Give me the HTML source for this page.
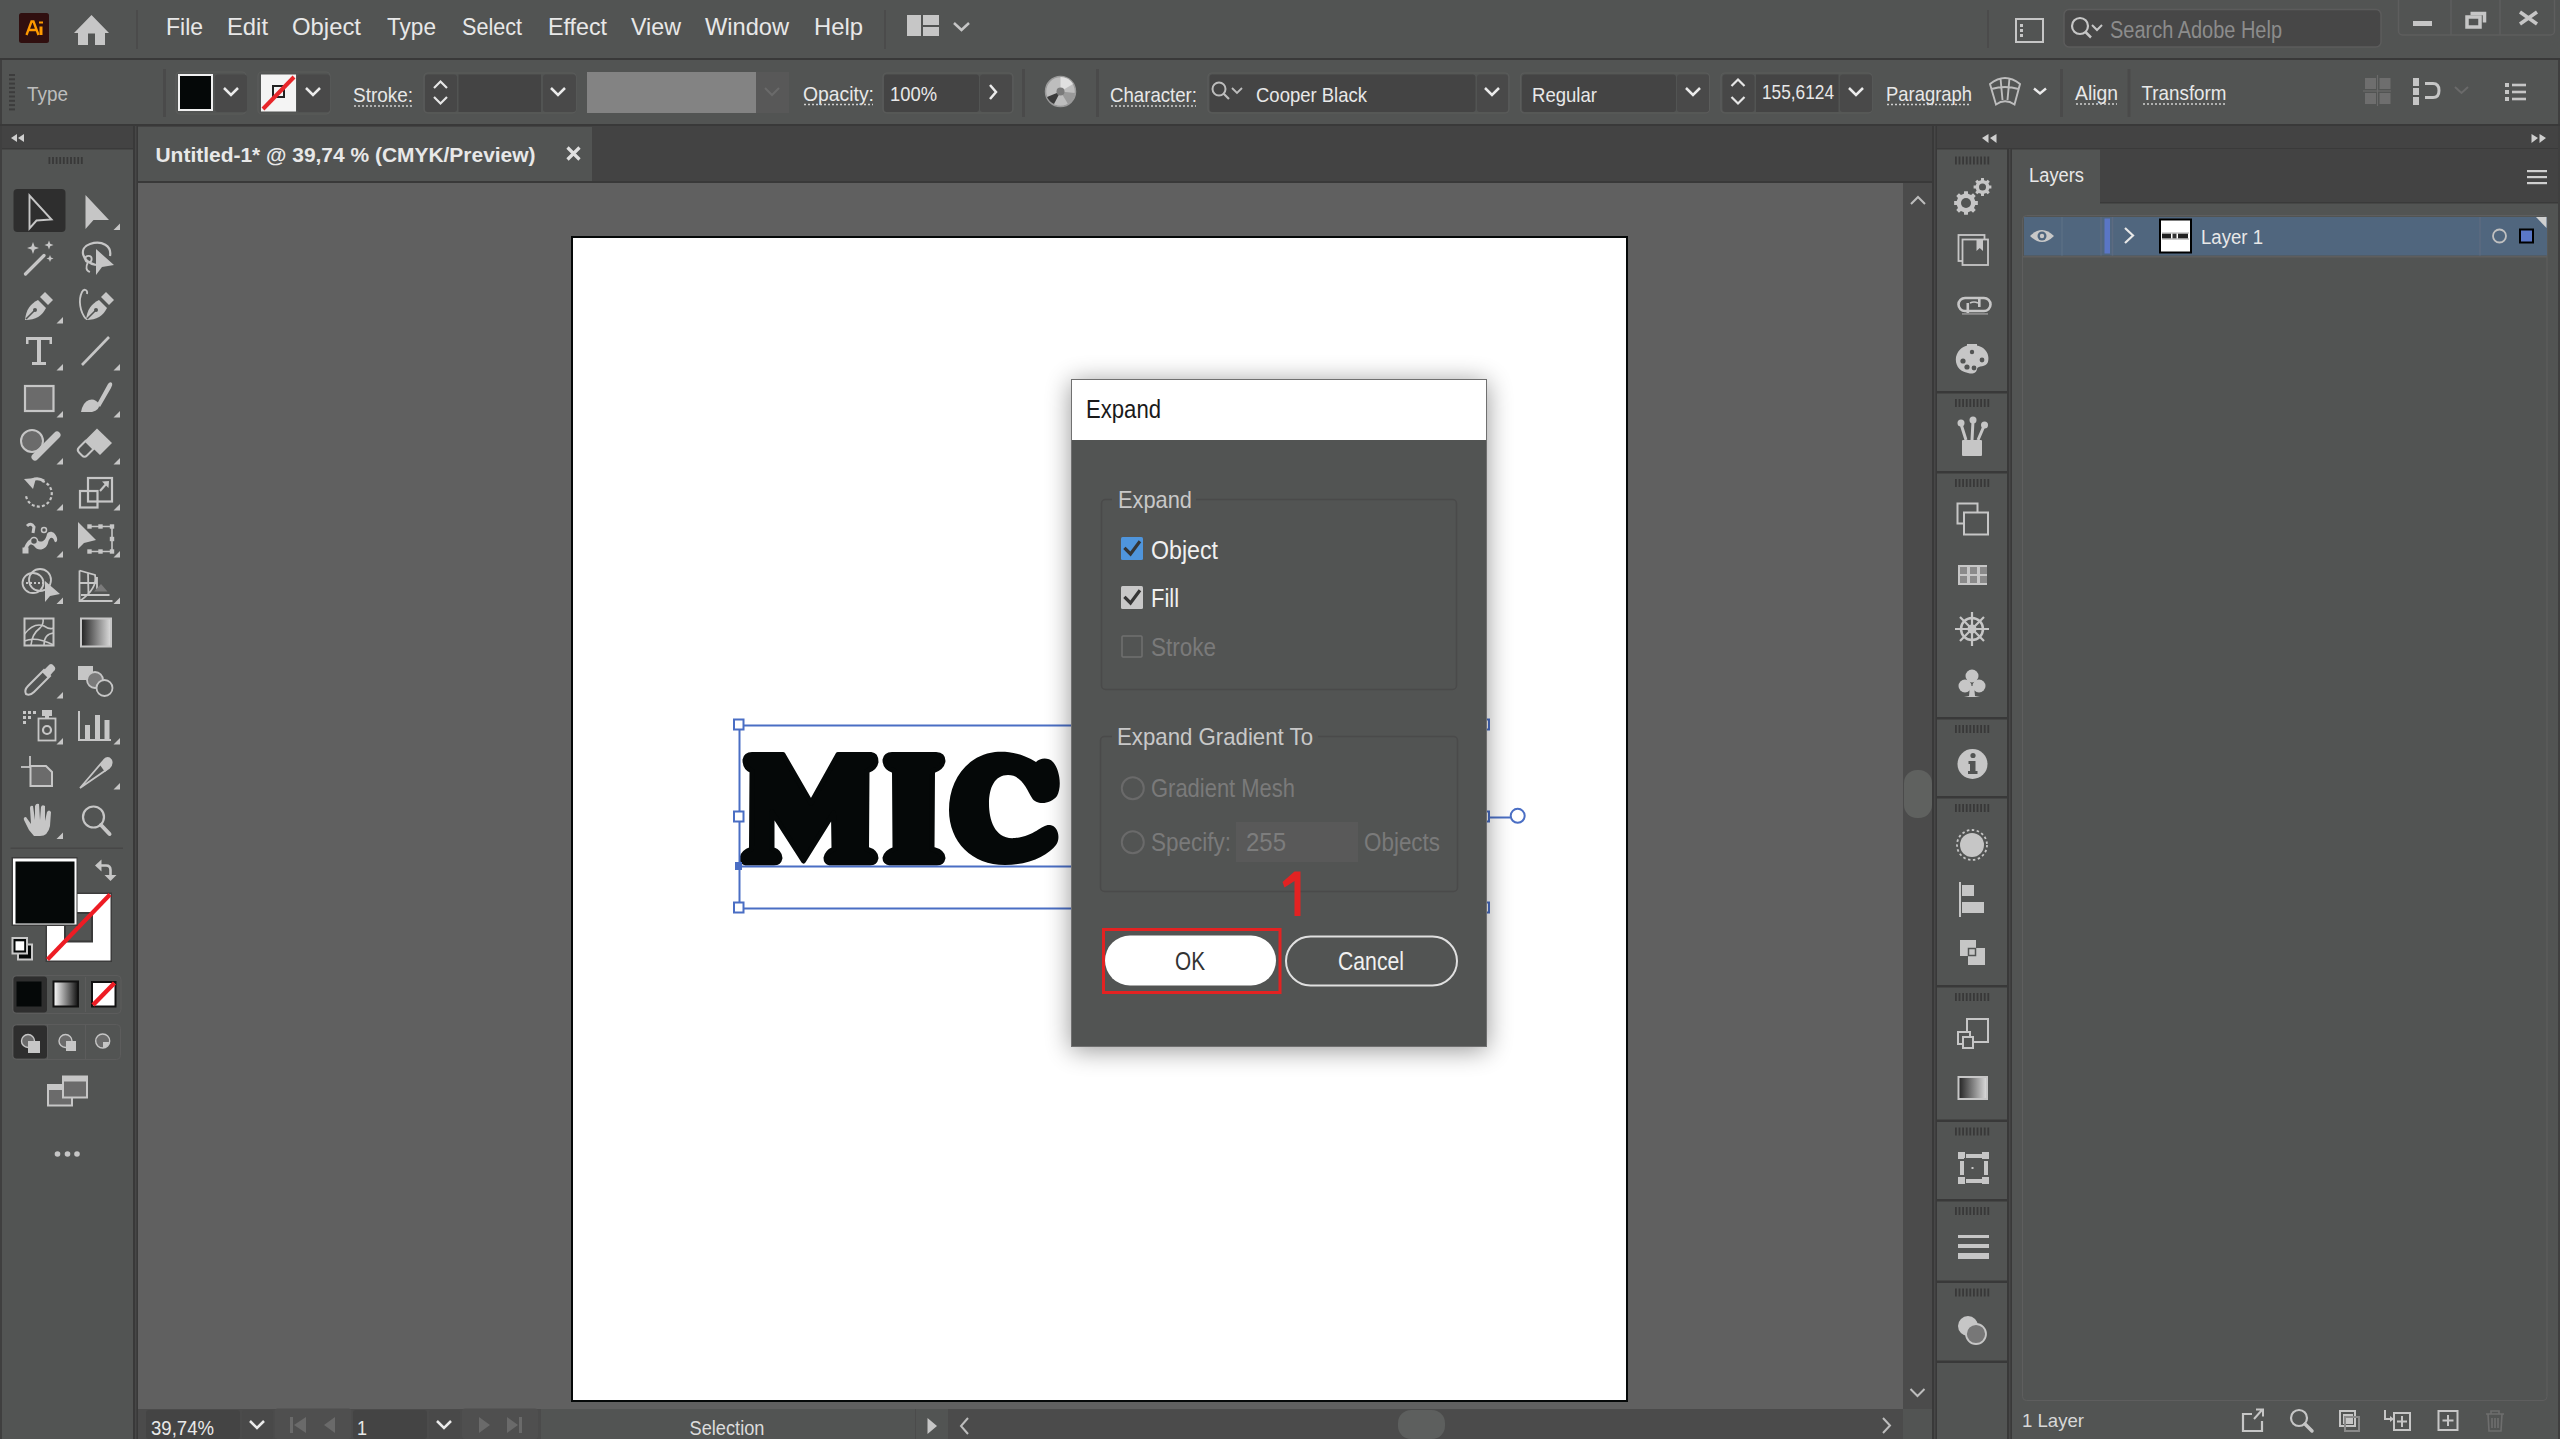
<!DOCTYPE html>
<html><head><meta charset="utf-8"><title>Illustrator</title>
<style>html,body{margin:0;padding:0;background:#525453;overflow:hidden;width:2560px;height:1439px}svg{display:block}</style>
</head><body>
<svg width="2560" height="1439" viewBox="0 0 2560 1439" shape-rendering="geometricPrecision">
<rect x="0" y="0" width="2560" height="1439" fill="#525453" />
<rect x="0" y="0" width="2560" height="58" fill="#525453" />
<rect x="0" y="58" width="2560" height="2" fill="#393939" />
<rect x="0" y="60" width="2560" height="64" fill="#525453" />
<rect x="0" y="60" width="2" height="64" fill="#3f3f3f" />
<rect x="2558" y="60" width="2" height="64" fill="#3f3f3f" />
<rect x="0" y="124" width="2560" height="2" fill="#393939" />
<rect x="0" y="126" width="2" height="1313" fill="#3f3f3f" />
<rect x="2" y="126" width="131" height="23" fill="#434343" />
<rect x="2" y="148" width="131" height="1.5" fill="#3a3a3a" />
<rect x="133" y="126" width="5" height="1313" fill="#393939" />
<rect x="135" y="126" width="1.5" height="1313" fill="#474747" />
<rect x="138" y="126" width="1794" height="55" fill="#434343" />
<rect x="138" y="127" width="454" height="54" fill="#525453" />
<rect x="138" y="181" width="1794" height="2" fill="#393939" />
<rect x="138" y="183" width="1765" height="1226" fill="#606060" />
<rect x="1903" y="183" width="29" height="1226" fill="#4b4b4b" />
<rect x="138" y="1409" width="1765" height="30" fill="#4b4b4b" />
<rect x="1903" y="1409" width="29" height="30" fill="#525453" />
<rect x="1932" y="126" width="5" height="1313" fill="#393939" />
<rect x="1934" y="126" width="1.5" height="1313" fill="#474747" />
<rect x="1937" y="126" width="621" height="23" fill="#434343" />
<rect x="1937" y="148" width="621" height="1.5" fill="#3a3a3a" />
<rect x="2007" y="149" width="5" height="1290" fill="#393939" />
<rect x="2009" y="149" width="1.5" height="1290" fill="#474747" />
<rect x="2558" y="126" width="2" height="1313" fill="#3f3f3f" />
<rect x="2100" y="149" width="458" height="54" fill="#434343" />
<rect x="2100" y="202" width="458" height="1.5" fill="#3a3a3a" />
<rect x="571" y="236" width="1057" height="1166" fill="#050808" />
<rect x="573" y="238" width="1053" height="1162" fill="#ffffff" />
<g fill="#050808" stroke="#050808" stroke-width="5" stroke-linejoin="round">
<path d="M745,760 Q746,754.5 752,754.5 L783,754.5 L811,803 L838,754.5 L871,754.5 Q876,755 876,762 Q875,768 867,771 L866.5,849 Q876,852 876,858 Q875,863 870,863 L830,863 Q826,862 826,858 Q827,852 834,849 L833.5,813 L803.5,861 L772,812 L772,849 Q780,852 780,858 Q779,863 774,863 L746,863 Q742,862 742,858 Q743,852 751.5,849 L752,771 Q745,768 745,760 Z" fill="#050808" />
<path d="M885,760 Q886,754.5 892,754.5 L936,754.5 Q943,755 943,761 Q942,768 932.5,771 L932,849 Q943,852 943,858 Q942,863 937,863 L890,863 Q885,862 885,858 Q886,852 895,849 L894.5,771 Q885,768 885,760 Z" fill="#050808" />
</g>
<path d="M1036,762 C1020,752 1005,751 995,752 C965,756 949,782 949,810 C949,842 972,865 1005,865 C1030,865 1048,855 1056,845 C1061,838 1058,826 1050,825 C1042,824 1035,836 1015,838 C995,840 989,820 989,804 C989,787 995,775 1008,775 C1022,775 1027,790 1032,798 C1036,805 1050,805 1057,796 C1062,787 1060,770 1053,762 C1048,757 1040,758 1036,762 Z" fill="#050808" />
<line x1="739.5" y1="725.5" x2="1487" y2="725.5" stroke="#4a6ec4" stroke-width="2" />
<line x1="739.5" y1="866.5" x2="1487" y2="866.5" stroke="#4a6ec4" stroke-width="2" />
<line x1="739.5" y1="908.5" x2="1487" y2="908.5" stroke="#4a6ec4" stroke-width="2" />
<line x1="739.5" y1="725" x2="739.5" y2="909" stroke="#4a6ec4" stroke-width="2" />
<rect x="734" y="719.5" width="9.5" height="10" fill="#ffffff" stroke="#4a6ec4" stroke-width="2" />
<rect x="734" y="811.5" width="9.5" height="10" fill="#ffffff" stroke="#4a6ec4" stroke-width="2" />
<rect x="734" y="902.5" width="9.5" height="10" fill="#ffffff" stroke="#4a6ec4" stroke-width="2" />
<rect x="735" y="862" width="7" height="8" fill="#4a6ec4" />
<rect x="1482" y="719.5" width="7" height="10" fill="#ffffff" stroke="#4a6ec4" stroke-width="2" />
<rect x="1482" y="811.5" width="7" height="10" fill="#ffffff" stroke="#4a6ec4" stroke-width="2" />
<rect x="1482" y="902.5" width="7" height="10" fill="#ffffff" stroke="#4a6ec4" stroke-width="2" />
<line x1="1489" y1="817.5" x2="1510" y2="817.5" stroke="#4a6ec4" stroke-width="2" />
<circle cx="1517.7" cy="815.8" r="7" fill="#ffffff" stroke="#4a6ec4" stroke-width="2"/>
<defs><filter id="dsh" x="-30%" y="-30%" width="160%" height="160%"><feGaussianBlur in="SourceAlpha" stdDeviation="13"/><feOffset dx="0" dy="3"/><feComponentTransfer><feFuncA type="linear" slope="0.42"/></feComponentTransfer><feMerge><feMergeNode/><feMergeNode in="SourceGraphic"/></feMerge></filter></defs>
<g filter="url(#dsh)">
<rect x="1071" y="379" width="416" height="668" fill="#707070" />
</g>
<rect x="1072" y="380" width="414" height="60" fill="#ffffff" />
<rect x="1072" y="440" width="414" height="606" fill="#525453" />
<text x="1086" y="418" style="font-family:'Liberation Sans'" font-size="25" fill="#1a1a1a" font-weight="normal" textLength="75" lengthAdjust="spacingAndGlyphs" >Expand</text>
<rect x="1101.5" y="499.5" width="355" height="190" fill="none" stroke="#4a4a4a" stroke-width="1.5" rx="4" />
<rect x="1112" y="490" width="84" height="18" fill="#525453" />
<text x="1118" y="507.5" style="font-family:'Liberation Sans'" font-size="24" fill="#c8c8c8" font-weight="normal" textLength="74" lengthAdjust="spacingAndGlyphs" >Expand</text>
<rect x="1100.5" y="736.5" width="357" height="155" fill="none" stroke="#4a4a4a" stroke-width="1.5" rx="4" />
<rect x="1112" y="726" width="206" height="20" fill="#525453" />
<text x="1117" y="745" style="font-family:'Liberation Sans'" font-size="24" fill="#c8c8c8" font-weight="normal" textLength="196" lengthAdjust="spacingAndGlyphs" >Expand Gradient To</text>
<rect x="1121" y="537" width="22" height="23" fill="#4f95dc" rx="1.5" />
<path d="M1125.5,549 L1130.5,554 L1139,542.5" fill="none" stroke="#353535" stroke-width="3.2" stroke-linecap="square"/>
<text x="1151" y="559" style="font-family:'Liberation Sans'" font-size="25" fill="#f0f0f0" font-weight="normal" textLength="67" lengthAdjust="spacingAndGlyphs" >Object</text>
<rect x="1121" y="586" width="22" height="23" fill="#c8c8c8" rx="1.5" />
<path d="M1125.5,598 L1130.5,603 L1139,591.5" fill="none" stroke="#353535" stroke-width="3.2" stroke-linecap="square"/>
<text x="1151" y="607" style="font-family:'Liberation Sans'" font-size="25" fill="#f0f0f0" font-weight="normal" textLength="28" lengthAdjust="spacingAndGlyphs" >Fill</text>
<rect x="1122" y="636" width="20" height="21" fill="none" stroke="#707070" stroke-width="1.5" rx="1" />
<text x="1151" y="656" style="font-family:'Liberation Sans'" font-size="25" fill="#7a7a7a" font-weight="normal" textLength="65" lengthAdjust="spacingAndGlyphs" >Stroke</text>
<circle cx="1132.8" cy="788.3" r="11" fill="none" stroke="#6a6a6a" stroke-width="2"/>
<text x="1151" y="797" style="font-family:'Liberation Sans'" font-size="25" fill="#7a7a7a" font-weight="normal" textLength="144" lengthAdjust="spacingAndGlyphs" >Gradient Mesh</text>
<circle cx="1132.8" cy="842.3" r="11" fill="none" stroke="#6a6a6a" stroke-width="2"/>
<text x="1151" y="851" style="font-family:'Liberation Sans'" font-size="25" fill="#7a7a7a" font-weight="normal" textLength="80" lengthAdjust="spacingAndGlyphs" >Specify:</text>
<rect x="1236" y="822" width="122" height="40" fill="#595959" />
<text x="1246" y="851" style="font-family:'Liberation Sans'" font-size="25" fill="#7d7d7d" font-weight="normal" textLength="40" lengthAdjust="spacingAndGlyphs" >255</text>
<text x="1364" y="851" style="font-family:'Liberation Sans'" font-size="25" fill="#7a7a7a" font-weight="normal" textLength="76" lengthAdjust="spacingAndGlyphs" >Objects</text>
<path d="M1294.5,871.5 L1300.5,871.5 L1300.5,916 L1294.5,916 L1294.5,881 L1284.5,887.5 L1282.5,882 Z" fill="#e32222" />
<rect x="1105" y="935.5" width="171" height="50" fill="#ffffff" rx="25" />
<rect x="1103.5" y="929.5" width="176.5" height="63" fill="none" stroke="#e32222" stroke-width="3" />
<text x="1175" y="970" style="font-family:'Liberation Sans'" font-size="25" fill="#333333" font-weight="normal" textLength="30" lengthAdjust="spacingAndGlyphs" >OK</text>
<rect x="1286" y="936.5" width="171" height="49" fill="none" stroke="#e0e0e0" stroke-width="2" rx="24.5" />
<text x="1338" y="970" style="font-family:'Liberation Sans'" font-size="25" fill="#f0f0f0" font-weight="normal" textLength="66" lengthAdjust="spacingAndGlyphs" >Cancel</text>
<rect x="19" y="13" width="30" height="30" fill="#300f0f" rx="2.5" />
<path d="M26.5,35 L31.5,21.5 L33.5,21.5 L38.5,35 M28.5,30 L36.5,30" fill="none" stroke="#ff9a00" stroke-width="2.3" />
<rect x="39.5" y="26.5" width="3" height="8.5" fill="#ff9a00" />
<rect x="39" y="21.5" width="4" height="2" fill="#ff9a00" />
<path d="M91.5,15 L109,33 L105,33 L105,45 L95,45 L95,33.5 L88,33.5 L88,45 L78,45 L78,33 L74,33 Z" fill="#c6c6c6" />
<rect x="136" y="10" width="2" height="39" fill="#4b4b4b" />
<text x="166" y="34.8" style="font-family:'Liberation Sans'" font-size="24" fill="#e8e8e8" font-weight="normal" textLength="37" lengthAdjust="spacingAndGlyphs" >File</text>
<text x="227" y="34.8" style="font-family:'Liberation Sans'" font-size="24" fill="#e8e8e8" font-weight="normal" textLength="41" lengthAdjust="spacingAndGlyphs" >Edit</text>
<text x="292" y="34.8" style="font-family:'Liberation Sans'" font-size="24" fill="#e8e8e8" font-weight="normal" textLength="69" lengthAdjust="spacingAndGlyphs" >Object</text>
<text x="387" y="34.8" style="font-family:'Liberation Sans'" font-size="24" fill="#e8e8e8" font-weight="normal" textLength="49" lengthAdjust="spacingAndGlyphs" >Type</text>
<text x="462" y="34.8" style="font-family:'Liberation Sans'" font-size="24" fill="#e8e8e8" font-weight="normal" textLength="60" lengthAdjust="spacingAndGlyphs" >Select</text>
<text x="548" y="34.8" style="font-family:'Liberation Sans'" font-size="24" fill="#e8e8e8" font-weight="normal" textLength="59" lengthAdjust="spacingAndGlyphs" >Effect</text>
<text x="631" y="34.8" style="font-family:'Liberation Sans'" font-size="24" fill="#e8e8e8" font-weight="normal" textLength="50" lengthAdjust="spacingAndGlyphs" >View</text>
<text x="705" y="34.8" style="font-family:'Liberation Sans'" font-size="24" fill="#e8e8e8" font-weight="normal" textLength="84" lengthAdjust="spacingAndGlyphs" >Window</text>
<text x="814" y="34.8" style="font-family:'Liberation Sans'" font-size="24" fill="#e8e8e8" font-weight="normal" textLength="49" lengthAdjust="spacingAndGlyphs" >Help</text>
<rect x="884" y="10" width="2" height="39" fill="#4b4b4b" />
<rect x="907" y="15" width="14" height="21" fill="#c6c6c6" />
<rect x="923" y="15" width="16" height="10" fill="#c6c6c6" />
<rect x="923" y="27" width="16" height="9" fill="#c6c6c6" />
<path d="M954,23 L961.5,30 L969,23" fill="none" stroke="#c6c6c6" stroke-width="2.5" />
<rect x="1987" y="10" width="2" height="38" fill="#4b4b4b" />
<rect x="2016" y="19" width="27" height="23" fill="none" stroke="#c6c6c6" stroke-width="2" />
<rect x="2020" y="24" width="3" height="3" fill="#c6c6c6" />
<rect x="2020" y="29" width="3" height="3" fill="#c6c6c6" />
<rect x="2020" y="34" width="3" height="3" fill="#c6c6c6" />
<rect x="2064" y="9.5" width="317" height="37.5" fill="#474747" rx="5" stroke="#5c5c5c" stroke-width="1.5"/>
<circle cx="2080" cy="26" r="8" fill="none" stroke="#c6c6c6" stroke-width="2.2"/>
<line x1="2085.5" y1="32" x2="2091" y2="37.5" stroke="#c6c6c6" stroke-width="2.5" />
<path d="M2092,25 L2097,30 L2102,25" fill="none" stroke="#c6c6c6" stroke-width="2" />
<text x="2110" y="37.5" style="font-family:'Liberation Sans'" font-size="23" fill="#8c8c8c" font-weight="normal" textLength="172" lengthAdjust="spacingAndGlyphs" >Search Adobe Help</text>
<rect x="2398.5" y="-5" width="156" height="40" fill="none" stroke="#5e5e5e" stroke-width="1.5" rx="4" />
<line x1="2451" y1="0" x2="2451" y2="35" stroke="#5e5e5e" stroke-width="1.5" />
<line x1="2500" y1="0" x2="2500" y2="35" stroke="#5e5e5e" stroke-width="1.5" />
<rect x="2413" y="21" width="19" height="5" fill="#c6c6c6" />
<rect x="2467" y="17" width="13" height="10" fill="none" stroke="#c6c6c6" stroke-width="3.5" />
<path d="M2470.5,13.5 L2484.5,13.5 L2484.5,22.5" fill="none" stroke="#c6c6c6" stroke-width="3.5" />
<path d="M2520,12 L2537,24 M2537,12 L2520,24" fill="none" stroke="#c6c6c6" stroke-width="3.5" />
<rect x="9" y="74.0" width="6" height="2" fill="#3c3c3c" />
<rect x="9" y="78.3" width="6" height="2" fill="#3c3c3c" />
<rect x="9" y="82.6" width="6" height="2" fill="#3c3c3c" />
<rect x="9" y="86.9" width="6" height="2" fill="#3c3c3c" />
<rect x="9" y="91.2" width="6" height="2" fill="#3c3c3c" />
<rect x="9" y="95.5" width="6" height="2" fill="#3c3c3c" />
<rect x="9" y="99.8" width="6" height="2" fill="#3c3c3c" />
<rect x="9" y="104.1" width="6" height="2" fill="#3c3c3c" />
<rect x="9" y="108.4" width="6" height="2" fill="#3c3c3c" />
<text x="27" y="101" style="font-family:'Liberation Sans'" font-size="21" fill="#bdbdbd" font-weight="normal" textLength="41" lengthAdjust="spacingAndGlyphs" >Type</text>
<rect x="163" y="69" width="3" height="48" fill="#4a4a4a" />
<rect x="176" y="72" width="70" height="42" fill="none" stroke="#5b5c5b" stroke-width="1.2" rx="4" />
<rect x="178" y="74" width="35" height="37" fill="#f0f0f0" />
<rect x="180" y="76" width="31" height="33" fill="#050808" />
<rect x="215" y="74.5" width="32" height="37.5" fill="#494949" rx="3" />
<path d="M224,88 L231,95 L238,88" fill="none" stroke="#ebebeb" stroke-width="2.5" />
<rect x="258" y="72" width="72" height="42" fill="none" stroke="#5b5c5b" stroke-width="1.2" rx="4" />
<rect x="261" y="74.5" width="35" height="37" fill="#f4f4f4" />
<rect x="273" y="86" width="11" height="11" fill="none" stroke="#222" stroke-width="2" />
<line x1="263" y1="109" x2="294" y2="77" stroke="#e8262a" stroke-width="4" />
<rect x="297" y="74.5" width="33" height="37.5" fill="#494949" rx="3" />
<path d="M306,88 L313,95 L320,88" fill="none" stroke="#ebebeb" stroke-width="2.5" />
<text x="353" y="102" style="font-family:'Liberation Sans'" font-size="21" fill="#e8e8e8" font-weight="normal" textLength="60" lengthAdjust="spacingAndGlyphs" >Stroke:</text>
<line x1="354" y1="106" x2="413" y2="106" stroke="#d0d0d0" stroke-width="1.5" stroke-dasharray="2,2"/>
<rect x="424" y="73" width="152" height="40" fill="none" stroke="#5b5c5b" stroke-width="1.2" rx="4" />
<rect x="425" y="74.5" width="32" height="37.5" fill="#474747" rx="3" />
<path d="M434,88 L440.5,81.5 L447,88 M434,97 L440.5,103.5 L447,97" fill="none" stroke="#e6e6e6" stroke-width="2.2" />
<rect x="458.5" y="74.5" width="82.5" height="37.5" fill="#444444" />
<rect x="543" y="74.5" width="33" height="37.5" fill="#494949" rx="3" />
<path d="M551,88 L558,95 L565,88" fill="none" stroke="#ebebeb" stroke-width="2.5" />
<rect x="587" y="72" width="169" height="41" fill="#838383" />
<rect x="756" y="72" width="33" height="41" fill="#585858" />
<path d="M765,88 L772,95 L779,88" fill="none" stroke="#6a6a6a" stroke-width="2" />
<text x="803" y="100.5" style="font-family:'Liberation Sans'" font-size="21" fill="#e8e8e8" font-weight="normal" textLength="71" lengthAdjust="spacingAndGlyphs" >Opacity:</text>
<line x1="804" y1="104.5" x2="873" y2="104.5" stroke="#d0d0d0" stroke-width="1.5" stroke-dasharray="2,2"/>
<rect x="883" y="73" width="130" height="40" fill="none" stroke="#5b5c5b" stroke-width="1.2" rx="4" />
<rect x="884" y="74.5" width="95" height="37.5" fill="#444444" rx="3" />
<text x="890" y="100.5" style="font-family:'Liberation Sans'" font-size="21" fill="#e8e8e8" font-weight="normal" textLength="47" lengthAdjust="spacingAndGlyphs" >100%</text>
<rect x="980" y="74.5" width="32" height="37.5" fill="#494949" rx="3" />
<path d="M990,85 L996,92 L990,99" fill="none" stroke="#ebebeb" stroke-width="2.5" />
<rect x="1022" y="69" width="3" height="48" fill="#4a4a4a" />
<circle cx="1060.5" cy="91.5" r="15" fill="#bdbdbd" stroke="#9a9a9a" stroke-width="1.5"/>
<path d="M1060.5,91.5 L1060.5,77 A14.5,14.5 0 0 1 1073,84 Z" fill="#e0e0e0" />
<path d="M1060.5,91.5 L1047,97 A14.5,14.5 0 0 0 1054,104 Z" fill="#3a3a3a" />
<path d="M1060.5,91.5 L1075,93 A14.5,14.5 0 0 1 1068,104 Z" fill="#999" />
<circle cx="1060.5" cy="91.5" r="4" fill="#7a7a7a"/>
<rect x="1096" y="69" width="3" height="48" fill="#4a4a4a" />
<text x="1110" y="101.5" style="font-family:'Liberation Sans'" font-size="21" fill="#e8e8e8" font-weight="normal" textLength="87" lengthAdjust="spacingAndGlyphs" >Character:</text>
<line x1="1111" y1="106" x2="1196" y2="106" stroke="#d0d0d0" stroke-width="1.5" stroke-dasharray="2,2"/>
<rect x="1208" y="73" width="301" height="40" fill="none" stroke="#5b5c5b" stroke-width="1.2" rx="4" />
<rect x="1209.5" y="74.5" width="266" height="37.5" fill="#444444" rx="3" />
<circle cx="1219" cy="89" r="6.5" fill="none" stroke="#bdbdbd" stroke-width="2"/>
<line x1="1223.5" y1="93.5" x2="1229" y2="99" stroke="#bdbdbd" stroke-width="2.2" />
<path d="M1232,88 L1237,93 L1242,88" fill="none" stroke="#bdbdbd" stroke-width="1.8" />
<text x="1256" y="101.5" style="font-family:'Liberation Sans'" font-size="21" fill="#e8e8e8" font-weight="normal" textLength="111" lengthAdjust="spacingAndGlyphs" >Cooper Black</text>
<rect x="1477" y="74.5" width="31" height="37.5" fill="#494949" rx="3" />
<path d="M1485,88 L1492,95 L1499,88" fill="none" stroke="#ebebeb" stroke-width="2.5" />
<rect x="1520.5" y="73" width="189" height="40" fill="none" stroke="#5b5c5b" stroke-width="1.2" rx="4" />
<rect x="1522" y="74.5" width="154" height="37.5" fill="#444444" rx="3" />
<text x="1532" y="101.5" style="font-family:'Liberation Sans'" font-size="21" fill="#e8e8e8" font-weight="normal" textLength="65" lengthAdjust="spacingAndGlyphs" >Regular</text>
<rect x="1677" y="74.5" width="32" height="37.5" fill="#494949" rx="3" />
<path d="M1686,88 L1693,95 L1700,88" fill="none" stroke="#ebebeb" stroke-width="2.5" />
<rect x="1721" y="73" width="151" height="40" fill="none" stroke="#5b5c5b" stroke-width="1.2" rx="4" />
<rect x="1722.5" y="74.5" width="32" height="37.5" fill="#474747" rx="3" />
<path d="M1731.5,86 L1738,79.5 L1744.5,86 M1731.5,97 L1738,103.5 L1744.5,97" fill="none" stroke="#e6e6e6" stroke-width="2.2" />
<rect x="1756" y="74.5" width="82.5" height="37.5" fill="#444444" />
<text x="1762" y="98.5" style="font-family:'Liberation Sans'" font-size="21" fill="#e8e8e8" font-weight="normal" textLength="72" lengthAdjust="spacingAndGlyphs" >155,6124</text>
<rect x="1840" y="74.5" width="32" height="37.5" fill="#494949" rx="3" />
<path d="M1849,88 L1856,95 L1863,88" fill="none" stroke="#ebebeb" stroke-width="2.5" />
<text x="1886" y="100.5" style="font-family:'Liberation Sans'" font-size="21" fill="#e8e8e8" font-weight="normal" textLength="86" lengthAdjust="spacingAndGlyphs" >Paragraph</text>
<line x1="1887" y1="104.5" x2="1971" y2="104.5" stroke="#d0d0d0" stroke-width="1.5" stroke-dasharray="2,2"/>
<path d="M1990,84 Q2005,72 2020,84 L2014.5,104.5 Q2005,98 1996,104.5 Z M2000.5,78 L2002.5,100 M2009.5,78 L2007.5,100 M1991.5,89 Q2005,85 2018.5,89" fill="none" stroke="#bdbdbd" stroke-width="1.9" />
<path d="M2034,88.5 L2040,93.5 L2046,88.5" fill="none" stroke="#ebebeb" stroke-width="2.4" />
<rect x="2060" y="69" width="3" height="48" fill="#4a4a4a" />
<text x="2075" y="99.8" style="font-family:'Liberation Sans'" font-size="21" fill="#e8e8e8" font-weight="normal" textLength="43" lengthAdjust="spacingAndGlyphs" >Align</text>
<line x1="2076" y1="104" x2="2117" y2="104" stroke="#d0d0d0" stroke-width="1.5" stroke-dasharray="2,2"/>
<rect x="2127.5" y="69" width="3" height="48" fill="#4a4a4a" />
<text x="2141.5" y="99.8" style="font-family:'Liberation Sans'" font-size="21" fill="#e8e8e8" font-weight="normal" textLength="85" lengthAdjust="spacingAndGlyphs" >Transform</text>
<line x1="2143" y1="104" x2="2226" y2="104" stroke="#d0d0d0" stroke-width="1.5" stroke-dasharray="2,2"/>
<rect x="2365" y="78" width="11" height="11" fill="#6e6e6e" />
<rect x="2379.5" y="78" width="11" height="11" fill="#6e6e6e" />
<rect x="2365" y="93" width="11" height="11" fill="#6e6e6e" />
<rect x="2379.5" y="93" width="11" height="11" fill="#6e6e6e" />
<line x1="2363" y1="91" x2="2391" y2="91" stroke="#6a6a6a" stroke-width="1.2" />
<line x1="2377.5" y1="75" x2="2377.5" y2="106" stroke="#6a6a6a" stroke-width="1.2" />
<rect x="2413" y="78" width="6" height="8" fill="#c6c6c6" />
<rect x="2413" y="88" width="6" height="7" fill="#c6c6c6" />
<rect x="2413" y="97" width="6" height="8" fill="#c6c6c6" />
<path d="M2425,83.5 L2433,83.5 Q2439,83.5 2439,90.5 Q2439,97.5 2433,97.5 L2425,97.5" fill="none" stroke="#c6c6c6" stroke-width="3" />
<path d="M2455,87 L2461.5,93 L2468,87" fill="none" stroke="#6a6a6a" stroke-width="2" />
<rect x="2505" y="83" width="4" height="4" fill="#c6c6c6" />
<rect x="2512" y="83.7" width="14" height="2.6" fill="#c6c6c6" />
<rect x="2505" y="90" width="4" height="4" fill="#c6c6c6" />
<rect x="2512" y="90.7" width="14" height="2.6" fill="#c6c6c6" />
<rect x="2505" y="97" width="4" height="4" fill="#c6c6c6" />
<rect x="2512" y="97.7" width="14" height="2.6" fill="#c6c6c6" />
<text x="155.5" y="161.5" style="font-family:'Liberation Sans'" font-size="21" fill="#e8e8e8" font-weight="bold" textLength="380" lengthAdjust="spacingAndGlyphs" >Untitled-1* @ 39,74 % (CMYK/Preview)</text>
<path d="M567.5,147.5 L579.5,159.5 M579.5,147.5 L567.5,159.5" fill="none" stroke="#e0e0e0" stroke-width="3.2" />
<path d="M11,138 L17,134 L17,142 Z M18,138 L24,134 L24,142 Z" fill="#cfcfcf" />
<rect x="48.5" y="157" width="1.8" height="7" fill="#383838" />
<rect x="52.1" y="157" width="1.8" height="7" fill="#383838" />
<rect x="55.7" y="157" width="1.8" height="7" fill="#383838" />
<rect x="59.3" y="157" width="1.8" height="7" fill="#383838" />
<rect x="62.9" y="157" width="1.8" height="7" fill="#383838" />
<rect x="66.5" y="157" width="1.8" height="7" fill="#383838" />
<rect x="70.1" y="157" width="1.8" height="7" fill="#383838" />
<rect x="73.7" y="157" width="1.8" height="7" fill="#383838" />
<rect x="77.3" y="157" width="1.8" height="7" fill="#383838" />
<rect x="80.9" y="157" width="1.8" height="7" fill="#383838" />
<rect x="146" y="1410" width="94" height="29" fill="#444444" rx="3" />
<text x="151" y="1435" style="font-family:'Liberation Sans'" font-size="20" fill="#e8e8e8" font-weight="normal" textLength="63" lengthAdjust="spacingAndGlyphs" >39,74%</text>
<rect x="242" y="1410" width="31" height="29" fill="#494949" rx="3" />
<path d="M250,1421 L257,1428 L264,1421" fill="none" stroke="#ebebeb" stroke-width="2.5" />
<rect x="274.5" y="1408.5" width="77" height="30.5" fill="#4f4f4f" rx="3" />
<rect x="290" y="1417" width="3" height="16" fill="#6a6a6a" />
<path d="M306,1417 L306,1433 L294,1425 Z" fill="#6a6a6a" />
<path d="M335,1417 L335,1433 L324,1425 Z" fill="#6a6a6a" />
<rect x="353" y="1410" width="74" height="29" fill="#444444" rx="3" />
<text x="357" y="1435" style="font-family:'Liberation Sans'" font-size="20" fill="#e8e8e8" font-weight="normal" textLength="10" lengthAdjust="spacingAndGlyphs" >1</text>
<rect x="429" y="1410" width="31" height="29" fill="#494949" rx="3" />
<path d="M437,1421 L444,1428 L451,1421" fill="none" stroke="#ebebeb" stroke-width="2.5" />
<rect x="462" y="1408.5" width="76" height="30.5" fill="#4f4f4f" rx="3" />
<path d="M479,1417 L479,1433 L490,1425 Z" fill="#6a6a6a" />
<path d="M507,1417 L507,1433 L518,1425 Z" fill="#6a6a6a" />
<rect x="519" y="1417" width="3" height="16" fill="#6a6a6a" />
<rect x="541" y="1409" width="374" height="30" fill="#525453" />
<text x="689.5" y="1434.5" style="font-family:'Liberation Sans'" font-size="20" fill="#dcdcdc" font-weight="normal" textLength="75" lengthAdjust="spacingAndGlyphs" >Selection</text>
<rect x="916" y="1409" width="32" height="30" fill="#525453" />
<path d="M927.5,1418 L927.5,1434 L937,1426 Z" fill="#c6c6c6" />
<path d="M968,1418 L961,1426 L968,1434" fill="none" stroke="#bdbdbd" stroke-width="2" />
<rect x="1398" y="1410" width="47" height="29" fill="#5d5f5e" rx="13" />
<path d="M1883,1418 L1890,1425.5 L1883,1433" fill="none" stroke="#bdbdbd" stroke-width="2" />
<path d="M1911,204 L1918,197 L1925,204" fill="none" stroke="#bdbdbd" stroke-width="2" />
<rect x="1904" y="770" width="28" height="48" fill="#5f615f" rx="13" />
<path d="M1910.5,1389 L1917.5,1396 L1924.5,1389" fill="none" stroke="#bdbdbd" stroke-width="2" />
<path d="M1982,138 L1988.5,134 L1988.5,143 Z M1990,138 L1996.5,134 L1996.5,143 Z" fill="#cfcfcf" />
<path d="M2546,138 L2539.5,134 L2539.5,143 Z M2538,138 L2531.5,134 L2531.5,143 Z" fill="#cfcfcf" />
<rect x="1937" y="391" width="70" height="2.5" fill="#393939" />
<rect x="1937" y="471" width="70" height="2.5" fill="#393939" />
<rect x="1937" y="717" width="70" height="2.5" fill="#393939" />
<rect x="1937" y="796" width="70" height="2.5" fill="#393939" />
<rect x="1937" y="985" width="70" height="2.5" fill="#393939" />
<rect x="1937" y="1119.5" width="70" height="2.5" fill="#393939" />
<rect x="1937" y="1199" width="70" height="2.5" fill="#393939" />
<rect x="1937" y="1280.5" width="70" height="2.5" fill="#393939" />
<rect x="1937" y="1360.5" width="70" height="2.5" fill="#393939" />
<rect x="1955.0" y="156.5" width="1.8" height="8" fill="#383838" />
<rect x="1958.6" y="156.5" width="1.8" height="8" fill="#383838" />
<rect x="1962.2" y="156.5" width="1.8" height="8" fill="#383838" />
<rect x="1965.8" y="156.5" width="1.8" height="8" fill="#383838" />
<rect x="1969.4" y="156.5" width="1.8" height="8" fill="#383838" />
<rect x="1973.0" y="156.5" width="1.8" height="8" fill="#383838" />
<rect x="1976.6" y="156.5" width="1.8" height="8" fill="#383838" />
<rect x="1980.2" y="156.5" width="1.8" height="8" fill="#383838" />
<rect x="1983.8" y="156.5" width="1.8" height="8" fill="#383838" />
<rect x="1987.4" y="156.5" width="1.8" height="8" fill="#383838" />
<rect x="1955.0" y="399" width="1.8" height="8" fill="#383838" />
<rect x="1958.6" y="399" width="1.8" height="8" fill="#383838" />
<rect x="1962.2" y="399" width="1.8" height="8" fill="#383838" />
<rect x="1965.8" y="399" width="1.8" height="8" fill="#383838" />
<rect x="1969.4" y="399" width="1.8" height="8" fill="#383838" />
<rect x="1973.0" y="399" width="1.8" height="8" fill="#383838" />
<rect x="1976.6" y="399" width="1.8" height="8" fill="#383838" />
<rect x="1980.2" y="399" width="1.8" height="8" fill="#383838" />
<rect x="1983.8" y="399" width="1.8" height="8" fill="#383838" />
<rect x="1987.4" y="399" width="1.8" height="8" fill="#383838" />
<rect x="1955.0" y="479" width="1.8" height="8" fill="#383838" />
<rect x="1958.6" y="479" width="1.8" height="8" fill="#383838" />
<rect x="1962.2" y="479" width="1.8" height="8" fill="#383838" />
<rect x="1965.8" y="479" width="1.8" height="8" fill="#383838" />
<rect x="1969.4" y="479" width="1.8" height="8" fill="#383838" />
<rect x="1973.0" y="479" width="1.8" height="8" fill="#383838" />
<rect x="1976.6" y="479" width="1.8" height="8" fill="#383838" />
<rect x="1980.2" y="479" width="1.8" height="8" fill="#383838" />
<rect x="1983.8" y="479" width="1.8" height="8" fill="#383838" />
<rect x="1987.4" y="479" width="1.8" height="8" fill="#383838" />
<rect x="1955.0" y="725" width="1.8" height="8" fill="#383838" />
<rect x="1958.6" y="725" width="1.8" height="8" fill="#383838" />
<rect x="1962.2" y="725" width="1.8" height="8" fill="#383838" />
<rect x="1965.8" y="725" width="1.8" height="8" fill="#383838" />
<rect x="1969.4" y="725" width="1.8" height="8" fill="#383838" />
<rect x="1973.0" y="725" width="1.8" height="8" fill="#383838" />
<rect x="1976.6" y="725" width="1.8" height="8" fill="#383838" />
<rect x="1980.2" y="725" width="1.8" height="8" fill="#383838" />
<rect x="1983.8" y="725" width="1.8" height="8" fill="#383838" />
<rect x="1987.4" y="725" width="1.8" height="8" fill="#383838" />
<rect x="1955.0" y="804" width="1.8" height="8" fill="#383838" />
<rect x="1958.6" y="804" width="1.8" height="8" fill="#383838" />
<rect x="1962.2" y="804" width="1.8" height="8" fill="#383838" />
<rect x="1965.8" y="804" width="1.8" height="8" fill="#383838" />
<rect x="1969.4" y="804" width="1.8" height="8" fill="#383838" />
<rect x="1973.0" y="804" width="1.8" height="8" fill="#383838" />
<rect x="1976.6" y="804" width="1.8" height="8" fill="#383838" />
<rect x="1980.2" y="804" width="1.8" height="8" fill="#383838" />
<rect x="1983.8" y="804" width="1.8" height="8" fill="#383838" />
<rect x="1987.4" y="804" width="1.8" height="8" fill="#383838" />
<rect x="1955.0" y="993" width="1.8" height="8" fill="#383838" />
<rect x="1958.6" y="993" width="1.8" height="8" fill="#383838" />
<rect x="1962.2" y="993" width="1.8" height="8" fill="#383838" />
<rect x="1965.8" y="993" width="1.8" height="8" fill="#383838" />
<rect x="1969.4" y="993" width="1.8" height="8" fill="#383838" />
<rect x="1973.0" y="993" width="1.8" height="8" fill="#383838" />
<rect x="1976.6" y="993" width="1.8" height="8" fill="#383838" />
<rect x="1980.2" y="993" width="1.8" height="8" fill="#383838" />
<rect x="1983.8" y="993" width="1.8" height="8" fill="#383838" />
<rect x="1987.4" y="993" width="1.8" height="8" fill="#383838" />
<rect x="1955.0" y="1127.5" width="1.8" height="8" fill="#383838" />
<rect x="1958.6" y="1127.5" width="1.8" height="8" fill="#383838" />
<rect x="1962.2" y="1127.5" width="1.8" height="8" fill="#383838" />
<rect x="1965.8" y="1127.5" width="1.8" height="8" fill="#383838" />
<rect x="1969.4" y="1127.5" width="1.8" height="8" fill="#383838" />
<rect x="1973.0" y="1127.5" width="1.8" height="8" fill="#383838" />
<rect x="1976.6" y="1127.5" width="1.8" height="8" fill="#383838" />
<rect x="1980.2" y="1127.5" width="1.8" height="8" fill="#383838" />
<rect x="1983.8" y="1127.5" width="1.8" height="8" fill="#383838" />
<rect x="1987.4" y="1127.5" width="1.8" height="8" fill="#383838" />
<rect x="1955.0" y="1207" width="1.8" height="8" fill="#383838" />
<rect x="1958.6" y="1207" width="1.8" height="8" fill="#383838" />
<rect x="1962.2" y="1207" width="1.8" height="8" fill="#383838" />
<rect x="1965.8" y="1207" width="1.8" height="8" fill="#383838" />
<rect x="1969.4" y="1207" width="1.8" height="8" fill="#383838" />
<rect x="1973.0" y="1207" width="1.8" height="8" fill="#383838" />
<rect x="1976.6" y="1207" width="1.8" height="8" fill="#383838" />
<rect x="1980.2" y="1207" width="1.8" height="8" fill="#383838" />
<rect x="1983.8" y="1207" width="1.8" height="8" fill="#383838" />
<rect x="1987.4" y="1207" width="1.8" height="8" fill="#383838" />
<rect x="1955.0" y="1288.5" width="1.8" height="8" fill="#383838" />
<rect x="1958.6" y="1288.5" width="1.8" height="8" fill="#383838" />
<rect x="1962.2" y="1288.5" width="1.8" height="8" fill="#383838" />
<rect x="1965.8" y="1288.5" width="1.8" height="8" fill="#383838" />
<rect x="1969.4" y="1288.5" width="1.8" height="8" fill="#383838" />
<rect x="1973.0" y="1288.5" width="1.8" height="8" fill="#383838" />
<rect x="1976.6" y="1288.5" width="1.8" height="8" fill="#383838" />
<rect x="1980.2" y="1288.5" width="1.8" height="8" fill="#383838" />
<rect x="1983.8" y="1288.5" width="1.8" height="8" fill="#383838" />
<rect x="1987.4" y="1288.5" width="1.8" height="8" fill="#383838" />
<text x="2029" y="181.5" style="font-family:'Liberation Sans'" font-size="20" fill="#e8e8e8" font-weight="normal" textLength="55" lengthAdjust="spacingAndGlyphs" >Layers</text>
<rect x="2527" y="170" width="20" height="2.2" fill="#cfcfcf" />
<rect x="2527" y="176" width="20" height="2.2" fill="#cfcfcf" />
<rect x="2527" y="182" width="20" height="2.2" fill="#cfcfcf" />
<rect x="2022.5" y="215.5" width="524.5" height="1185" fill="none" stroke="#5e5e5e" stroke-width="1" rx="4" />
<rect x="2024" y="217" width="523" height="38.5" fill="#50667e" />
<line x1="2062" y1="217" x2="2062" y2="255.5" stroke="#5a6f85" stroke-width="1.5" />
<line x1="2101" y1="217" x2="2101" y2="255.5" stroke="#5c6b80" stroke-width="1.5" />
<line x1="2112.5" y1="217" x2="2112.5" y2="255.5" stroke="#5c6b80" stroke-width="1.5" />
<line x1="2480" y1="217" x2="2480" y2="255.5" stroke="#5c6b80" stroke-width="1.5" />
<rect x="2104.5" y="218.5" width="5.5" height="35" fill="#5a76c6" />
<rect x="2023" y="256" width="524" height="1.5" fill="#5e5e5e" />
<path d="M2030,236 Q2042,224 2054,236 Q2042,248 2030,236 Z" fill="#c8c8c8" />
<circle cx="2042" cy="236" r="4.5" fill="#50667e"/>
<circle cx="2042" cy="236" r="2.2" fill="#c8c8c8"/>
<path d="M2125,228 L2133,235.5 L2125,243" fill="none" stroke="#e8e8e8" stroke-width="2.2" />
<rect x="2159" y="218.5" width="33" height="35" fill="#000000" />
<rect x="2161" y="220.5" width="29" height="31" fill="#ffffff" />
<rect x="2162" y="233.5" width="9" height="5" fill="#222" />
<rect x="2172.5" y="233.5" width="4" height="5" fill="#333" />
<rect x="2178" y="233.5" width="10" height="5" fill="#222" />
<rect x="2162" y="232.5" width="27" height="1" fill="#aaa" />
<rect x="2162" y="238.5" width="27" height="1" fill="#999" />
<text x="2201" y="243.5" style="font-family:'Liberation Sans'" font-size="20" fill="#e8e8e8" font-weight="normal" textLength="62" lengthAdjust="spacingAndGlyphs" >Layer 1</text>
<circle cx="2499.5" cy="236" r="6.5" fill="none" stroke="#c0c0c0" stroke-width="1.8"/>
<rect x="2519" y="228.5" width="15" height="15" fill="#000" />
<rect x="2521" y="230.5" width="11" height="11" fill="#5a77c8" />
<path d="M2536,217 L2546.5,217 L2546.5,228 Z" fill="#d0d0d0" />
<text x="2022" y="1427" style="font-family:'Liberation Sans'" font-size="19" fill="#d8d8d8" font-weight="normal" textLength="62" lengthAdjust="spacingAndGlyphs" >1 Layer</text>
<rect x="13.5" y="189" width="52" height="43" fill="#2e2e2e" rx="4" />
<path d="M29.5,195.5 L29.5,228.5 L36.5,220.5 L51.5,219.5 Z" fill="none" stroke="#c6c6c6" stroke-width="1.9" stroke-linejoin="miter"/>
<path d="M85.5,195 L85.5,229 L93.5,220 L109,220 Z" fill="#c6c6c6" />
<path d="M120,230 L113.5,230 L120,223.5 Z" fill="#c6c6c6" />
<line x1="25.5" y1="274" x2="44" y2="255.5" stroke="#c6c6c6" stroke-width="3.2" stroke-linecap="round"/>
<path d="M33,242 L34.6,246.4 L39,248 L34.6,249.6 L33,254 L31.4,249.6 L27,248 L31.4,246.4 Z" fill="#c6c6c6" />
<path d="M49,240.5 L50.2,243.8 L53.5,245 L50.2,246.2 L49,249.5 L47.8,246.2 L44.5,245 L47.8,243.8 Z" fill="#c6c6c6" />
<path d="M50,255 L51,257.5 L53.5,258.5 L51,259.5 L50,262 L49,259.5 L46.5,258.5 L49,257.5 Z" fill="#c6c6c6" />
<path d="M96,265 C82,262 78,248 90,244 C102,240 112,246 110,256" fill="none" stroke="#c6c6c6" stroke-width="2.2" />
<circle cx="88.5" cy="259" r="3.2" fill="none" stroke="#c6c6c6" stroke-width="1.8"/>
<path d="M88,262 Q84,270 90,272" fill="none" stroke="#c6c6c6" stroke-width="1.8" />
<path d="M96,249 L96,275 L102,267 L114,265 Z" fill="#c6c6c6" />
<path d="M25,320 C26,310 30,304 38,300 L46,308 C42,316 36,320 25,320 Z" fill="#c6c6c6" />
<path d="M40,297 L45,292 L53,300 L48,305 Z" fill="#c6c6c6" />
<line x1="26" y1="319" x2="34" y2="311" stroke="#525453" stroke-width="1.6" />
<circle cx="35" cy="310" r="2" fill="#525453"/>
<path d="M63,323.5 L56.5,323.5 L63,317.0 Z" fill="#c6c6c6" />
<path d="M86,320 C87,310 91,304 99,300 L107,308 C103,316 97,320 86,320 Z" fill="#c6c6c6" />
<path d="M101,297 L106,292 L114,300 L109,305 Z" fill="#c6c6c6" />
<line x1="87" y1="319" x2="95" y2="311" stroke="#525453" stroke-width="1.6" />
<circle cx="96" cy="310" r="2" fill="#525453"/>
<path d="M86,319 C80,312 78,300 82,292 C84,288 88,290 87,294" fill="none" stroke="#c6c6c6" stroke-width="1.8" />
<path d="M26,337 L52,337 L52,344 L49.5,344 L49.5,340 L41,340 L41,362 L46,362 L46,365 L32,365 L32,362 L37,362 L37,340 L28.5,340 L28.5,344 L26,344 Z" fill="#c6c6c6" />
<path d="M63,370.5 L56.5,370.5 L63,364.0 Z" fill="#c6c6c6" />
<line x1="82" y1="365" x2="109" y2="337" stroke="#c6c6c6" stroke-width="2.6" />
<path d="M120,370.5 L113.5,370.5 L120,364.0 Z" fill="#c6c6c6" />
<rect x="25" y="386" width="28.5" height="25" fill="#6b6b6b" stroke="#c6c6c6" stroke-width="2.2" />
<path d="M63,417.5 L56.5,417.5 L63,411.0 Z" fill="#c6c6c6" />
<path d="M97,404 L108,384 Q110,381 112,383 Q113,385 111,388 L100,407 Z" fill="#c6c6c6" />
<path d="M81,412 Q83,402 89,400 Q95,398 99,404 Q100,410 92,412 Z" fill="#c6c6c6" />
<path d="M120,417.5 L113.5,417.5 L120,411.0 Z" fill="#c6c6c6" />
<circle cx="32" cy="441" r="11" fill="#6b6b6b" stroke="#c6c6c6" stroke-width="2"/>
<line x1="35" y1="457" x2="57" y2="435" stroke="#c6c6c6" stroke-width="7" stroke-linecap="round"/>
<path d="M63,464.5 L56.5,464.5 L63,458.0 Z" fill="#c6c6c6" />
<path d="M97,428.5 L112,443 L100,455 L85,440.5 Z" fill="#c6c6c6" />
<path d="M85.5,441 L93.5,449 L87,455.5 Q84.5,458 82,455.5 L79,452.5 Q76.5,450 79,447.5 Z" fill="#525453" stroke="#c6c6c6" stroke-width="2" />
<path d="M120,464.5 L113.5,464.5 L120,458.0 Z" fill="#c6c6c6" />
<path d="M42,481 A13,13 0 1 1 26,496" fill="none" stroke="#c6c6c6" stroke-width="2.2" stroke-dasharray="3,2.2"/>
<path d="M24,479 L36,478 L33,489 Z" fill="#c6c6c6" />
<path d="M32,480 Q38,477 44,481" fill="none" stroke="#c6c6c6" stroke-width="3" />
<path d="M63,510.5 L56.5,510.5 L63,504.0 Z" fill="#c6c6c6" />
<rect x="80" y="491" width="17.5" height="16.5" fill="none" stroke="#c6c6c6" stroke-width="2.2" />
<rect x="88" y="478" width="24" height="23.5" fill="none" stroke="#c6c6c6" stroke-width="2.2" />
<line x1="100" y1="491" x2="107" y2="483" stroke="#c6c6c6" stroke-width="2" />
<path d="M109,481 L102,481.5 L108.5,488 Z" fill="#c6c6c6" />
<path d="M120,510.5 L113.5,510.5 L120,504.0 Z" fill="#c6c6c6" />
<path d="M24,548 C27,540 32,536 37,540 C42,544 46,540 47,534 C49,530 55,531 57,538 C58,542 55,544 54,540 C52,536 49,538 48,543 C46,550 38,552 34,546 C31,542 28,546 27,551 Z" fill="#c6c6c6" />
<path d="M27,526 Q31,522 34,527 L33,533" fill="none" stroke="#c6c6c6" stroke-width="3" />
<circle cx="34" cy="541" r="3.5" fill="#525453" stroke="#c6c6c6" stroke-width="1.5"/>
<circle cx="44" cy="530" r="2.5" fill="#525453" stroke="#c6c6c6" stroke-width="1.5"/>
<rect x="22.5" y="547.5" width="6" height="6" fill="#c6c6c6" />
<path d="M63,557.5 L56.5,557.5 L63,551.0 Z" fill="#c6c6c6" />
<path d="M78,522 L78,549 L84,543 L96,540 Z" fill="#c6c6c6" />
<path d="M90,526.5 L112,526.5 L112,551.5 L89.5,551.5" fill="none" stroke="#c6c6c6" stroke-width="1.6" />
<rect x="87.3" y="549.3" width="4.4" height="4.4" fill="#c6c6c6" />
<rect x="98.3" y="549.3" width="4.4" height="4.4" fill="#c6c6c6" />
<rect x="109.8" y="549.3" width="4.4" height="4.4" fill="#c6c6c6" />
<rect x="109.8" y="524.3" width="4.4" height="4.4" fill="#c6c6c6" />
<rect x="109.8" y="536.8" width="4.4" height="4.4" fill="#c6c6c6" />
<rect x="98.3" y="524.3" width="4.4" height="4.4" fill="#c6c6c6" />
<rect x="87.3" y="524.3" width="4.4" height="4.4" fill="#c6c6c6" />
<path d="M120,557.5 L113.5,557.5 L120,551.0 Z" fill="#c6c6c6" />
<ellipse cx="33" cy="583" rx="10.5" ry="10" fill="none" stroke="#c6c6c6" stroke-width="1.8"/>
<ellipse cx="40" cy="580" rx="11" ry="11" fill="none" stroke="#c6c6c6" stroke-width="1.8"/>
<line x1="26" y1="583" x2="43" y2="583" stroke="#c6c6c6" stroke-width="1.8" stroke-dasharray="2,2"/>
<path d="M45,581 L45,602 L50,596 L60,594 Z" fill="#c6c6c6" />
<path d="M63,604 L56.5,604 L63,597.5 Z" fill="#c6c6c6" />
<path d="M79.5,570.5 L79.5,601 L112.5,601 M79.5,570.5 L95,575 Q98,588 80,601 M79.5,583 L97,583 M88,572.5 L88.5,596 M81,595 L109.5,595 M97,577 L97,589" fill="none" stroke="#c6c6c6" stroke-width="1.8" />
<path d="M94,591.5 L107.5,591.5 L101,584 Z" fill="#7a7a7a" />
<path d="M120,604 L113.5,604 L120,597.5 Z" fill="#c6c6c6" />
<rect x="24.5" y="618.5" width="29" height="27" fill="none" stroke="#c6c6c6" stroke-width="2" />
<path d="M24.5,634 Q34,622 44,626 Q50,630 53.5,628 M31,645 Q32,634 40,628 Q44,624 43,618.5 M24.5,641 Q36,636 53.5,645 M44,645 Q44,634 53.5,633" fill="none" stroke="#c6c6c6" stroke-width="1.6" />
<defs><linearGradient id="grd" x1="0" x2="1"><stop offset="0" stop-color="#222"/><stop offset="1" stop-color="#ddd"/></linearGradient><linearGradient id="grd2" x1="0" x2="1"><stop offset="0" stop-color="#fff"/><stop offset="1" stop-color="#111"/></linearGradient></defs>
<rect x="81" y="618.5" width="30" height="28" fill="url(#grd)" stroke="#c6c6c6" stroke-width="2"/>
<path d="M26,694 Q24,690 28,686 L44,670 L50,676 L34,692 Q30,696 26,694 Z" fill="none" stroke="#c6c6c6" stroke-width="2" />
<path d="M42,672 L48,666 Q51,662 54,666 Q57,669 53,672 L48,678 Z" fill="#c6c6c6" />
<path d="M63,698.5 L56.5,698.5 L63,692.0 Z" fill="#c6c6c6" />
<rect x="78" y="666" width="15" height="14" fill="#c6c6c6" />
<circle cx="95" cy="680" r="8" fill="#7a7a7a" stroke="#c6c6c6" stroke-width="1.8"/>
<circle cx="104.5" cy="688" r="8" fill="#525453" stroke="#c6c6c6" stroke-width="1.8"/>
<rect x="23" y="711" width="3" height="3" fill="#c6c6c6" />
<rect x="28" y="711" width="3" height="3" fill="#c6c6c6" />
<rect x="33" y="711" width="3" height="3" fill="#c6c6c6" />
<rect x="23" y="716" width="3" height="3" fill="#c6c6c6" />
<rect x="28" y="716" width="3" height="3" fill="#c6c6c6" />
<rect x="23" y="721" width="3" height="3" fill="#c6c6c6" />
<rect x="38.5" y="718.5" width="17" height="22" fill="none" stroke="#c6c6c6" stroke-width="1.8" />
<rect x="42" y="710" width="10" height="6" fill="#c6c6c6" />
<rect x="45" y="716" width="4" height="3" fill="#c6c6c6" />
<circle cx="47" cy="730" r="4" fill="none" stroke="#c6c6c6" stroke-width="2.2"/>
<path d="M63,744.5 L56.5,744.5 L63,738.0 Z" fill="#c6c6c6" />
<path d="M79,711 L79,740 L111,740" fill="none" stroke="#c6c6c6" stroke-width="2" />
<rect x="85" y="725" width="5" height="14" fill="#c6c6c6" />
<rect x="95" y="715" width="5" height="24" fill="#c6c6c6" />
<rect x="104.5" y="720" width="5" height="19" fill="#c6c6c6" />
<path d="M120,744.5 L113.5,744.5 L120,738.0 Z" fill="#c6c6c6" />
<line x1="30" y1="756" x2="30" y2="768" stroke="#c6c6c6" stroke-width="1.8" />
<line x1="21" y1="767" x2="33" y2="767" stroke="#c6c6c6" stroke-width="1.8" />
<path d="M30.5,766 L46,766 L52,772 L52,786 L30.5,786 Z" fill="#6b6b6b" stroke="#c6c6c6" stroke-width="2" />
<path d="M80,788 L104,760 Q108,756 111,760 Q113,764 109,768 Z" fill="none" stroke="#c6c6c6" stroke-width="1.8" />
<path d="M100,765 L104,760 Q108,756 111,760 Q113,764 109,768 L105,772 Z" fill="#c6c6c6" />
<path d="M120,789.5 L113.5,789.5 L120,783.0 Z" fill="#c6c6c6" />
<path d="M29,830 L24,820 Q23,817 26,817 L31,824 L30,808 Q30,805 33,806 L35,820 L35,806 Q36,803 39,804 L40,820 L41,807 Q42,804 45,806 L45,821 L47,812 Q49,809 51,812 L50,826 Q48,836 40,836 L34,836 Z" fill="#c6c6c6" />
<path d="M63,839 L56.5,839 L63,832.5 Z" fill="#c6c6c6" />
<circle cx="93.5" cy="817" r="10.5" fill="none" stroke="#c6c6c6" stroke-width="2.2"/>
<line x1="101" y1="825" x2="109.5" y2="834" stroke="#c6c6c6" stroke-width="4" stroke-linecap="round"/>
<rect x="10.5" y="847.5" width="112.5" height="1.5" fill="#474747" />
<rect x="45.5" y="892.5" width="66.5" height="69.5" fill="#3c3c3c" />
<rect x="47" y="894" width="63.5" height="66.5" fill="#ffffff" />
<rect x="64" y="912" width="29" height="30.5" fill="#3a3a3a" />
<rect x="66" y="914" width="25" height="26.5" fill="#525453" />
<line x1="47.5" y1="959.5" x2="110" y2="894.5" stroke="#ed1c24" stroke-width="4.2" />
<rect x="11.5" y="857" width="66" height="69" fill="#3c3c3c" />
<rect x="13" y="858.5" width="63.5" height="66" fill="#ffffff" />
<rect x="15.5" y="861.5" width="59" height="62" fill="#050808" />
<path d="M100,865.5 L106,865.5 Q110.5,865.5 110.5,870 L110.5,875.5" fill="none" stroke="#c6c6c6" stroke-width="2.6" />
<path d="M95,865.5 L101.5,859.5 L101.5,871.5 Z" fill="#c6c6c6" />
<path d="M104.5,875 L116.5,875 L110.5,881 Z" fill="#c6c6c6" />
<rect x="17" y="943.5" width="16" height="17" fill="#c8c8c8" />
<rect x="19" y="945.5" width="12" height="13" fill="#050808" />
<rect x="11.5" y="937" width="16.5" height="17.5" fill="#c8c8c8" />
<rect x="13.5" y="939" width="12.5" height="13.5" fill="#050808" />
<rect x="15.5" y="941.3" width="8.7" height="9.2" fill="#ffffff" />
<rect x="12.5" y="975.5" width="108.5" height="38" fill="none" stroke="#5c5c5c" stroke-width="1" rx="4" />
<rect x="13.5" y="976.5" width="33.5" height="36" fill="#2e2e2e" rx="3" />
<line x1="85.5" y1="977" x2="85.5" y2="1012" stroke="#5c5c5c" stroke-width="1" />
<rect x="16.5" y="981.5" width="25" height="25" fill="#050808" />
<rect x="53.5" y="981.5" width="24.5" height="25" fill="url(#grd2)" stroke="#111" stroke-width="2"/>
<rect x="92" y="982" width="23.5" height="24.5" fill="#ffffff" stroke="#111" stroke-width="2"/>
<line x1="93" y1="1005" x2="114.5" y2="983" stroke="#ed1c24" stroke-width="4.5" />
<rect x="12.5" y="1024.5" width="108" height="35" fill="none" stroke="#5c5c5c" stroke-width="1" rx="4" />
<rect x="13.5" y="1025.5" width="33.5" height="33" fill="#2e2e2e" rx="3" />
<line x1="47.5" y1="1025" x2="47.5" y2="1059" stroke="#5c5c5c" stroke-width="1" />
<line x1="85.5" y1="1025" x2="85.5" y2="1059" stroke="#5c5c5c" stroke-width="1" />
<circle cx="28" cy="1041" r="6.5" fill="#6b6b6b" stroke="#c6c6c6" stroke-width="1.4"/>
<rect x="28" y="1041" width="12" height="12" fill="#c6c6c6" />
<circle cx="65.5" cy="1041" r="6.5" fill="#6b6b6b" stroke="#c6c6c6" stroke-width="1.4"/>
<rect x="66" y="1041" width="10" height="10" fill="#c6c6c6" />
<circle cx="102.7" cy="1041" r="7" fill="#6b6b6b" stroke="#c6c6c6" stroke-width="1.4"/>
<path d="M103,1042 L109,1042 Q109,1047 103,1048 Z" fill="#c6c6c6" />
<rect x="47" y="1084" width="26" height="22.5" fill="#c6c6c6" />
<rect x="49" y="1090" width="22" height="14.5" fill="#6b6b6b" />
<rect x="62" y="1075.5" width="26" height="23" fill="#c6c6c6" />
<rect x="64" y="1081.5" width="22" height="15" fill="#6b6b6b" />
<circle cx="57.5" cy="1154" r="2.8" fill="#c6c6c6"/>
<circle cx="67.5" cy="1154" r="2.8" fill="#c6c6c6"/>
<circle cx="77" cy="1154" r="2.8" fill="#c6c6c6"/>
<path d="M1975.27,200.93 L1977.85,201.09 L1977.85,204.91 L1975.27,205.07 L1974.02,208.09 L1975.73,210.03 L1973.03,212.73 L1971.09,211.02 L1968.07,212.27 L1967.91,214.85 L1964.09,214.85 L1963.93,212.27 L1960.91,211.02 L1958.97,212.73 L1956.27,210.03 L1957.98,208.09 L1956.73,205.07 L1954.15,204.91 L1954.15,201.09 L1956.73,200.93 L1957.98,197.91 L1956.27,195.97 L1958.97,193.27 L1960.91,194.98 L1963.93,193.73 L1964.09,191.15 L1967.91,191.15 L1968.07,193.73 L1971.09,194.98 L1973.03,193.27 L1975.73,195.97 L1974.02,197.91 Z" fill="#c6c6c6" />
<circle cx="1966" cy="203" r="5" fill="#525453"/>
<path d="M1989.33,185.47 L1991.39,185.57 L1991.39,188.43 L1989.33,188.53 L1988.41,190.75 L1989.80,192.27 L1987.77,194.30 L1986.25,192.91 L1984.03,193.83 L1983.93,195.89 L1981.07,195.89 L1980.97,193.83 L1978.75,192.91 L1977.23,194.30 L1975.20,192.27 L1976.59,190.75 L1975.67,188.53 L1973.61,188.43 L1973.61,185.57 L1975.67,185.47 L1976.59,183.25 L1975.20,181.73 L1977.23,179.70 L1978.75,181.09 L1980.97,180.17 L1981.07,178.11 L1983.93,178.11 L1984.03,180.17 L1986.25,181.09 L1987.77,179.70 L1989.80,181.73 L1988.41,183.25 Z" fill="#c6c6c6" />
<circle cx="1982.5" cy="187" r="3.5" fill="#525453"/>
<rect x="1958.5" y="235" width="26" height="26" fill="#525453" stroke="#c6c6c6" stroke-width="1.8" />
<rect x="1962.5" y="239.5" width="25.5" height="25.5" fill="#525453" stroke="#c6c6c6" stroke-width="1.8" />
<path d="M1976.5,239.5 L1983,239.5 L1983,251 L1979.75,248 L1976.5,251 Z" fill="#c6c6c6" />
<rect x="1958.5" y="298" width="32" height="13" fill="none" stroke="#c6c6c6" stroke-width="2.6" rx="6.5" />
<rect x="1966.5" y="303" width="2.6" height="11" fill="#c6c6c6" />
<rect x="1978" y="299" width="2.6" height="8" fill="#c6c6c6" />
<path d="M1970,303 Q1974,301 1978,303" fill="none" stroke="#c6c6c6" stroke-width="1.5" />
<rect x="1962" y="313" width="26" height="1.8" fill="#8a8a8a" />
<path d="M1972,345 C1986,345 1990,355 1988,362 C1986,368 1978,365 1977,369 C1976,374 1972,374 1968,373 C1958,371 1955,364 1956,357 C1958,349 1964,345 1972,345 Z" fill="#c6c6c6" />
<circle cx="1963" cy="361" r="2.6" fill="#525453"/>
<circle cx="1967" cy="367" r="2.6" fill="#525453"/>
<circle cx="1974" cy="368" r="2.4" fill="#525453"/>
<circle cx="1982" cy="360" r="2.4" fill="#525453"/>
<circle cx="1972" cy="352" r="2.2" fill="#525453"/>
<rect x="1967" y="344" width="10" height="3" fill="#c6c6c6" />
<rect x="1962" y="440" width="20" height="16" fill="#c6c6c6" rx="1" />
<path d="M1966,440 L1961,424 M1972,440 L1973,421 M1978,440 L1984,426" fill="none" stroke="#c6c6c6" stroke-width="3" />
<circle cx="1961" cy="423" r="3.5" fill="#c6c6c6"/><circle cx="1973" cy="420" r="3.5" fill="#c6c6c6"/><circle cx="1984.5" cy="425" r="3.5" fill="#c6c6c6"/>
<rect x="1957.5" y="503.5" width="20" height="20" fill="#525453" stroke="#c6c6c6" stroke-width="2" />
<rect x="1964" y="512.5" width="24" height="22" fill="#525453" stroke="#c6c6c6" stroke-width="2" />
<rect x="1958" y="565" width="29" height="20" fill="#c6c6c6" />
<rect x="1960" y="567" width="7" height="7" fill="#8a8a8a" />
<rect x="1970" y="567" width="7" height="7" fill="#8a8a8a" />
<rect x="1980" y="567" width="7" height="7" fill="#8a8a8a" />
<rect x="1960" y="576" width="7" height="7" fill="#8a8a8a" />
<rect x="1970" y="576" width="7" height="7" fill="#8a8a8a" />
<rect x="1980" y="576" width="7" height="7" fill="#8a8a8a" />
<circle cx="1972" cy="629" r="11" fill="none" stroke="#c6c6c6" stroke-width="2.5"/>
<circle cx="1972" cy="629" r="3.5" fill="none" stroke="#c6c6c6" stroke-width="2"/>
<path d="M1972,612 L1972,646 M1955,629 L1989,629 M1960,617 L1984,641 M1984,617 L1960,641" fill="none" stroke="#c6c6c6" stroke-width="2.2" />
<circle cx="1972" cy="676" r="6.5" fill="#c6c6c6"/><circle cx="1965" cy="686" r="6.5" fill="#c6c6c6"/><circle cx="1979" cy="686" r="6.5" fill="#c6c6c6"/>
<path d="M1970,686 L1974,686 L1975,696 L1980,697 L1964,697 L1969,696 Z" fill="#c6c6c6" />
<circle cx="1972.5" cy="764" r="15" fill="#c6c6c6"/>
<circle cx="1973" cy="755.5" r="2.6" fill="#525453"/>
<path d="M1968.5,761 L1975.5,761 L1975.5,771 L1977.5,771 L1977.5,774 L1968,774 L1968,771 L1970,771 L1970,764 L1968.5,764 Z" fill="#525453" />
<circle cx="1972" cy="845" r="12" fill="#c6c6c6"/>
<circle cx="1972" cy="845" r="15" fill="none" stroke="#c6c6c6" stroke-width="1.8" stroke-dasharray="2.5,2.5"/>
<rect x="1959" y="882" width="2" height="35" fill="#c6c6c6" />
<rect x="1962" y="885" width="12" height="11" fill="#c6c6c6" />
<rect x="1962" y="902" width="22" height="11" fill="#c6c6c6" />
<rect x="1960" y="940" width="16" height="16" fill="#c6c6c6" />
<rect x="1968" y="948" width="17" height="17" fill="#c6c6c6" />
<rect x="1968.5" y="948.5" width="7" height="7" fill="none" stroke="#525453" stroke-width="1.5" />
<rect x="1967" y="1019" width="21" height="23" fill="#525453" stroke="#c6c6c6" stroke-width="2" />
<rect x="1958" y="1032" width="12" height="12" fill="#525453" stroke="#c6c6c6" stroke-width="2" />
<rect x="1963" y="1037" width="10" height="11" fill="#525453" stroke="#c6c6c6" stroke-width="2" />
<rect x="1958.5" y="1077" width="28.5" height="22" fill="url(#grd)" stroke="#c6c6c6" stroke-width="2"/>
<rect x="1958" y="1152" width="7" height="7" fill="#c6c6c6" />
<rect x="1982" y="1152" width="7" height="7" fill="#c6c6c6" />
<rect x="1958" y="1177" width="7" height="7" fill="#c6c6c6" />
<rect x="1982" y="1177" width="7" height="7" fill="#c6c6c6" />
<rect x="1960" y="1161" width="4" height="14" fill="#c6c6c6" />
<rect x="1984" y="1161" width="4" height="14" fill="#c6c6c6" />
<rect x="1966" y="1154" width="16" height="4" fill="#c6c6c6" />
<rect x="1966" y="1179" width="16" height="4" fill="#c6c6c6" />
<rect x="1964" y="1158" width="2" height="3" fill="#525453" />
<rect x="1971.5" y="1167" width="2" height="2" fill="#c6c6c6" />
<rect x="1958" y="1235" width="31" height="3" fill="#c6c6c6" />
<rect x="1958" y="1244" width="31" height="4" fill="#c6c6c6" />
<rect x="1958" y="1253" width="31" height="6" fill="#c6c6c6" />
<circle cx="1968" cy="1326" r="10" fill="#c6c6c6"/>
<circle cx="1976" cy="1334" r="10" fill="#777" stroke="#c6c6c6" stroke-width="1.8"/>
<path d="M2252,1414 L2243,1414 L2243,1431 L2262,1431 L2262,1421" fill="none" stroke="#c6c6c6" stroke-width="2.2" />
<path d="M2254,1419 L2262,1410 M2256,1409.5 L2263,1409.5 L2263,1416.5" fill="none" stroke="#c6c6c6" stroke-width="2" />
<circle cx="2299" cy="1418" r="8" fill="none" stroke="#c6c6c6" stroke-width="2.2"/>
<line x1="2305" y1="1424" x2="2312" y2="1431" stroke="#c6c6c6" stroke-width="3.5" stroke-linecap="round"/>
<rect x="2340" y="1411" width="15" height="15" fill="#525453" stroke="#c6c6c6" stroke-width="2" />
<rect x="2343" y="1414" width="10" height="10" fill="#c6c6c6" />
<rect x="2345" y="1417" width="14" height="14" fill="none" stroke="#8a8a8a" stroke-width="2" />
<path d="M2385,1410 L2385,1419 L2392,1419" fill="none" stroke="#c6c6c6" stroke-width="2" />
<path d="M2390,1416 L2394,1419 L2390,1422 Z" fill="#c6c6c6" />
<rect x="2394" y="1413" width="16" height="17" fill="none" stroke="#c6c6c6" stroke-width="2" />
<path d="M2402,1416 L2402,1427 M2397,1421.5 L2407,1421.5" fill="none" stroke="#c6c6c6" stroke-width="2" />
<rect x="2438.5" y="1411" width="19" height="19" fill="none" stroke="#c6c6c6" stroke-width="2" />
<path d="M2448,1415 L2448,1426 M2442.5,1420.5 L2453.5,1420.5" fill="none" stroke="#c6c6c6" stroke-width="2" />
<path d="M2486,1414 L2504,1414 M2491,1414 L2491,1411 L2499,1411 L2499,1414 M2488,1414 L2489,1431 L2501,1431 L2502,1414 M2492,1418 L2492,1428 M2495,1418 L2495,1428 M2498,1418 L2498,1428" fill="none" stroke="#6e6e6e" stroke-width="1.6" />
</svg>
</body></html>
